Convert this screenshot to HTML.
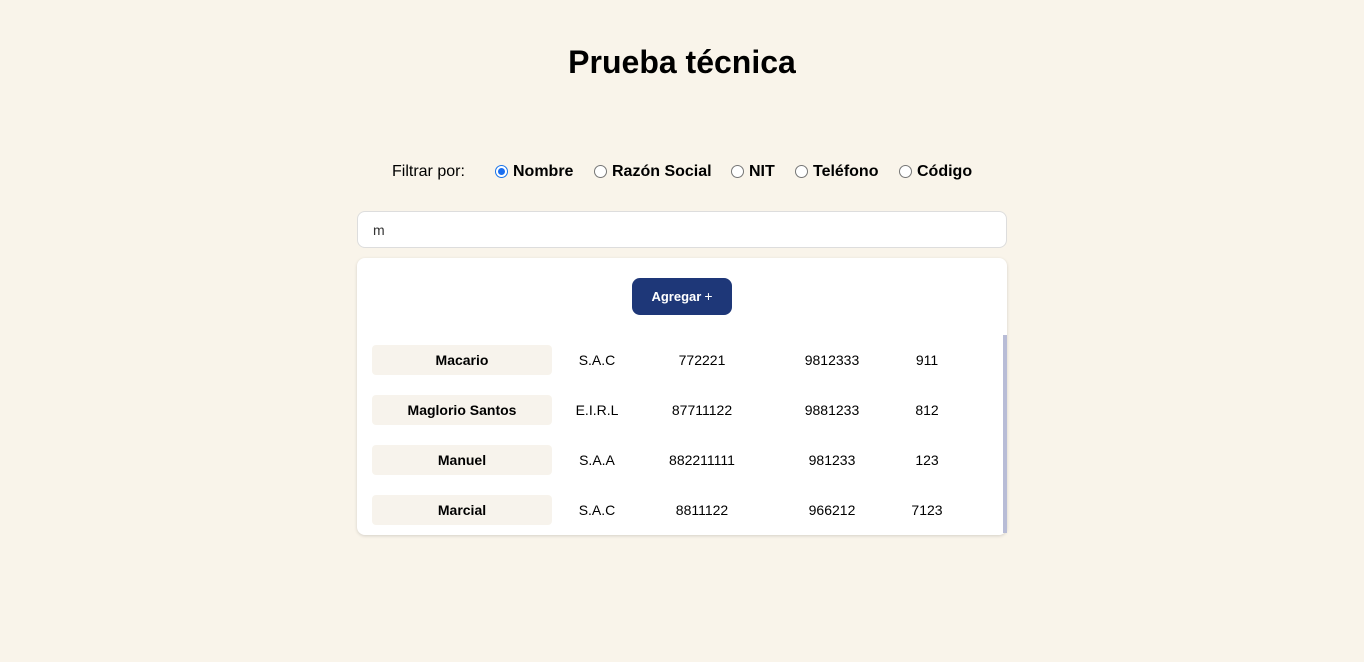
<!DOCTYPE html>
<html><head><meta charset="utf-8"><style>
*{box-sizing:border-box;margin:0;padding:0}
body{width:1364px;height:662px;background:#f9f4ea;font-family:"Liberation Sans",sans-serif;position:relative;overflow:hidden;color:#000}
h1{position:absolute;top:44px;left:0;width:1364px;text-align:center;font-size:32px;font-weight:bold}
.abs{position:absolute;white-space:nowrap}
.lbl{font-size:16px;top:163px}
.opt{font-size:16px;font-weight:bold;top:163px}
.rad{position:absolute;top:165px;width:13px;height:13px;border:1px solid #767676;border-radius:50%;background:#fff}
.rad.on{border:1px solid #1a73e8}
.rad.on::after{content:"";position:absolute;left:2px;top:2px;width:7px;height:7px;border-radius:50%;background:#1a6ef0}
.inp{position:absolute;left:357px;top:211px;width:650px;height:37px;background:#fff;border:1px solid #ddd;border-radius:8px;font-size:14px;padding:10px 15px;color:#333}
.card{position:absolute;left:357px;top:258px;width:650px;height:277px;background:#fff;border-radius:8px;box-shadow:0 1px 3px rgba(0,0,0,.15)}
.btn{position:absolute;left:632px;top:278px;width:100px;height:37px;background:#1e3778;border-radius:8px;color:#fff;font-size:13px;font-weight:bold;text-align:center;line-height:37px}
.btn span{font-weight:normal;font-size:14px;margin-left:3px}
.name{position:absolute;left:372px;width:180px;height:30px;background:#f7f3ec;border-radius:4px;font-weight:bold;font-size:14px;text-align:center;line-height:30px}
.c{position:absolute;font-size:14px;text-align:center;width:120px;line-height:30px}
.sb{position:absolute;left:1003px;top:335px;width:4px;height:198px;background:#b8bcd6}
</style></head><body>
<h1>Prueba técnica</h1>
<div class="abs lbl" style="left:392px">Filtrar por:</div>
<div class="rad on" style="left:495px"></div><div class="abs opt" style="left:513px">Nombre</div>
<div class="rad" style="left:594px"></div><div class="abs opt" style="left:612px">Razón Social</div>
<div class="rad" style="left:731px"></div><div class="abs opt" style="left:749px">NIT</div>
<div class="rad" style="left:795px"></div><div class="abs opt" style="left:813px">Teléfono</div>
<div class="rad" style="left:899px"></div><div class="abs opt" style="left:917px">Código</div>
<div class="inp">m</div>
<div class="card"></div>
<div class="btn">Agregar<span>+</span></div>
<div class="sb"></div>

<div class="name" style="top:345px">Macario</div>
<div class="c" style="left:537px;top:345px">S.A.C</div>
<div class="c" style="left:642px;top:345px">772221</div>
<div class="c" style="left:772px;top:345px">9812333</div>
<div class="c" style="left:867px;top:345px">911</div>

<div class="name" style="top:395px">Maglorio Santos</div>
<div class="c" style="left:537px;top:395px">E.I.R.L</div>
<div class="c" style="left:642px;top:395px">87711122</div>
<div class="c" style="left:772px;top:395px">9881233</div>
<div class="c" style="left:867px;top:395px">812</div>

<div class="name" style="top:445px">Manuel</div>
<div class="c" style="left:537px;top:445px">S.A.A</div>
<div class="c" style="left:642px;top:445px">882211111</div>
<div class="c" style="left:772px;top:445px">981233</div>
<div class="c" style="left:867px;top:445px">123</div>

<div class="name" style="top:495px">Marcial</div>
<div class="c" style="left:537px;top:495px">S.A.C</div>
<div class="c" style="left:642px;top:495px">8811122</div>
<div class="c" style="left:772px;top:495px">966212</div>
<div class="c" style="left:867px;top:495px">7123</div>
</body></html>
